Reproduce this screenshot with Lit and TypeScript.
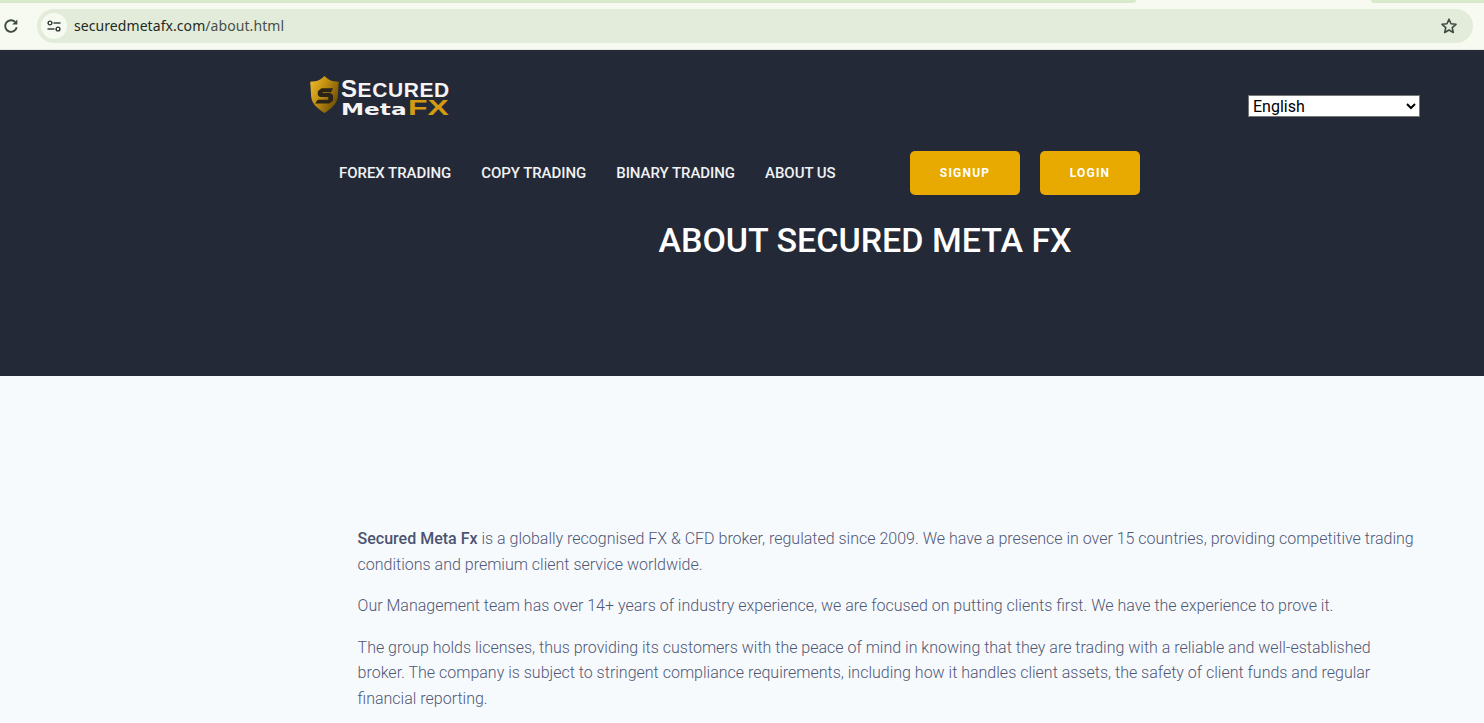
import { LitElement, html, css } from 'lit';
import { customElement } from 'lit/decorators.js';

const NAV_LINKS = ['FOREX TRADING', 'COPY TRADING', 'BINARY TRADING', 'ABOUT US'];

@customElement('app-root')
export class AppRoot extends LitElement {
  static styles = css`
    :host {
      display: block;
      height: 723px;
      overflow: hidden;
      background: #f7fafd;
      font-family: Roboto, 'Liberation Sans', sans-serif;
    }

    /* browser chrome */
    .chrome {
      height: 50px;
      box-sizing: border-box;
      background: #f6faf0;
      position: relative;
      border-bottom: 1px solid #e6e8e3;
    }
    .tab-left,
    .tab-right {
      position: absolute;
      top: 0;
      height: 3px;
      background: #d9e9cc;
    }
    .tab-left {
      left: 0;
      width: 1136px;
      border-bottom-right-radius: 6px;
    }
    .tab-right {
      left: 1371px;
      right: 0;
      border-bottom-left-radius: 6px;
    }
    .toolbar {
      display: flex;
      align-items: center;
      height: 49px;
      padding: 3px 11px 0 3px;
      box-sizing: border-box;
    }
    .reload {
      width: 16px;
      height: 16px;
      margin-right: 18px;
      flex-shrink: 0;
    }
    .omnibox {
      flex: 1;
      height: 34px;
      border-radius: 17px;
      background: #e3ecda;
      display: flex;
      align-items: center;
      padding: 0 15px 0 4px;
    }
    .site-info {
      width: 26px;
      height: 26px;
      border-radius: 50%;
      background: #f6faf0;
      display: flex;
      align-items: center;
      justify-content: center;
      margin-right: 7px;
    }
    .url {
      flex: 1;
      font-family: 'Noto Sans', 'Open Sans', sans-serif;
      font-size: 14px;
      line-height: 18px;
      letter-spacing: 0.07px;
      color: #1f2a22;
    }
    .url span {
      color: #47504a;
    }

    /* dark header */
    .header {
      height: 326px;
      background: #242937;
      box-sizing: border-box;
      color: #fff;
      padding-top: 26px;
    }
    .top-row {
      display: flex;
      justify-content: space-between;
      padding: 0 64px 0 310px;
      height: 75px;
    }
    .logo {
      display: flex;
      align-items: flex-start;
      height: 40px;
    }
    .logo-text {
      display: flex;
      flex-direction: column;
      margin-left: 2px;
      font-family: 'Liberation Sans', sans-serif;
      font-weight: 700;
    }
    .logo-top {
      font-size: 24px;
      line-height: 20px;
      height: 20px;
      margin-top: 3px;
      letter-spacing: 0.6px;
      color: #f4f4f4;
      white-space: nowrap;
    }
    .logo-top small {
      font-size: 21px;
    }
    .logo-bottom {
      font-family: 'DejaVu Sans', sans-serif;
      font-size: 16px;
      line-height: 18px;
      height: 18px;
      color: #f4f4f4;
      white-space: nowrap;
      transform: scaleX(1.45);
      transform-origin: left center;
    }
    .logo-fx {
      display: inline-block;
      height: 18px;
      font-family: 'Liberation Sans', sans-serif;
      font-size: 22px;
      line-height: 18px;
      color: #d39a12;
      margin-left: 1px;
    }
    select {
      width: 172px;
      height: 22px;
      margin-top: 19px;
      font-family: Roboto, sans-serif;
      font-size: 16px;
      background: #fff;
      color: #000;
      border: 1px solid #767676;
      border-radius: 0;
      padding: 0;
    }
    .nav-row {
      display: flex;
      align-items: center;
      height: 44px;
      padding-left: 339px;
    }
    .nav-links {
      display: flex;
      gap: 30px;
      width: 571px;
    }
    .nav-links a {
      font-size: 15px;
      font-weight: 500;
      color: #f1f2f4;
      white-space: nowrap;
      letter-spacing: -0.05px;
    }
    .btn {
      height: 44px;
      border-radius: 5px;
      background: #e8a900;
      display: flex;
      align-items: center;
      justify-content: center;
      font-size: 12px;
      font-weight: 700;
      letter-spacing: 1.2px;
      color: #fff;
    }
    .signup {
      width: 110px;
      margin-right: 20px;
    }
    .login {
      width: 100px;
    }
    h1 {
      margin: 25px 0 0;
      padding-left: 246px;
      text-align: center;
      font-size: 34px;
      line-height: 40px;
      font-weight: 500;
      color: #fff;
    }

    /* about text */
    .content {
      padding: 150px 67px 0 357.6px;
      font-size: 16px;
      font-weight: 300;
      line-height: 25.6px;
      color: #4f5876;
    }
    .content p {
      margin: 0 0 16px;
    }
    .content b {
      font-weight: 500;
      color: #4a5470;
    }
  `;

  renderLogoShield() {
    return html`<svg width="29" height="38" viewBox="0 0 30 40">
      <defs>
        <linearGradient id="gold" x1="0" y1="0" x2="1" y2="0.6">
          <stop offset="0" stop-color="#f2c22e" />
          <stop offset="0.5" stop-color="#c08d10" />
          <stop offset="1" stop-color="#6f5006" />
        </linearGradient>
      </defs>
      <path d="M0 6 C7 6 11 4 15 0 C19 4 23 6 30 6 L29 22 C28 30 21 35 15 39 C9 35 2 30 1 22 Z" fill="url(#gold)" />
      <path d="M24 13 H12 L8 16 V20 L10 22 H19 V25 H8 L5 29 H20 L24 26 V20 L21 18 H13 V17 H22 Z" fill="#2a2418" />
    </svg>`;
  }

  render() {
    return html`
      <div class="chrome">
        <div class="tab-left"></div>
        <div class="tab-right"></div>
        <div class="toolbar">
          <svg class="reload" viewBox="0 0 16 16" fill="none" stroke="#3c4a40" stroke-width="1.9">
            <path d="M13.7 9.2a5.8 5.8 0 1 1-1.6-5.3" />
            <path d="M14.4 1.4v5.2H9.2z" fill="#3c4a40" stroke="none" />
          </svg>
          <div class="omnibox">
            <div class="site-info">
              <svg width="14" height="12" viewBox="0 0 14 12" fill="none" stroke="#2c3530" stroke-width="1.4">
                <circle cx="3" cy="3" r="1.9" />
                <path d="M6.5 3h7" />
                <path d="M0.5 9h7" />
                <circle cx="11" cy="9" r="1.9" />
              </svg>
            </div>
            <div class="url">securedmetafx.com<span>/about.html</span></div>
            <svg width="18" height="18" viewBox="0 0 18 18" fill="none" stroke="#3f4a42" stroke-width="1.6" stroke-linejoin="round">
              <path d="M9 2.2l2 4.6 5 .5-3.8 3.3 1.1 4.9L9 13l-4.3 2.5 1.1-4.9L2 7.3l5-.5z" />
            </svg>
          </div>
        </div>
      </div>

      <header class="header">
        <div class="top-row">
          <div class="logo">
            ${this.renderLogoShield()}
            <div class="logo-text">
              <div class="logo-top">S<small>ECURED</small></div>
              <div class="logo-bottom">Meta<span class="logo-fx">FX</span></div>
            </div>
          </div>
          <select aria-label="Language">
            <option>English</option>
          </select>
        </div>
        <div class="nav-row">
          <nav class="nav-links">
            ${NAV_LINKS.map((link) => html`<a>${link}</a>`)}
          </nav>
          <div class="btn signup">SIGNUP</div>
          <div class="btn login">LOGIN</div>
        </div>
        <h1>ABOUT SECURED META FX</h1>
      </header>

      <main class="content">
        <p>
          <b>Secured Meta Fx</b> is a globally recognised FX &amp; CFD broker, regulated since 2009. We have a presence
          in over 15 countries, providing competitive trading conditions and premium client service worldwide.
        </p>
        <p>
          Our Management team has over 14+ years of industry experience, we are focused on putting clients first. We
          have the experience to prove it.
        </p>
        <p>
          The group holds licenses, thus providing its customers with the peace of mind in knowing that they are trading
          with a reliable and well-established broker. The company is subject to stringent compliance requirements,
          including how it handles client assets, the safety of client funds and regular financial reporting.
        </p>
      </main>
    `;
  }
}
